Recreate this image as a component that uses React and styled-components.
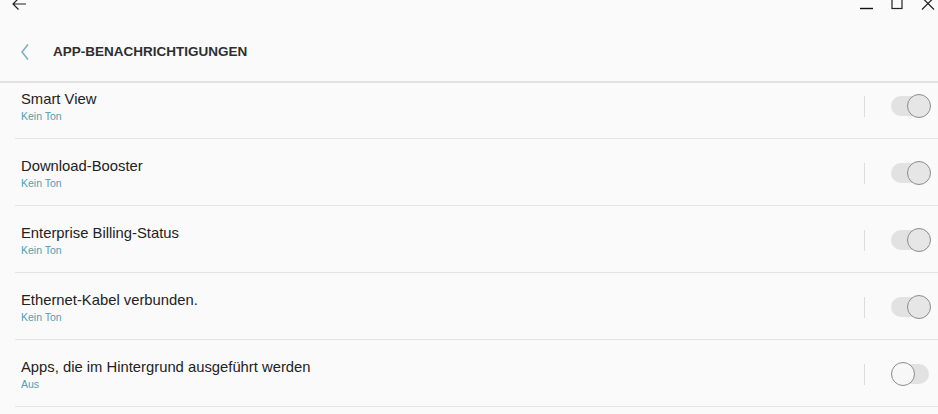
import React from "react";
import styled, { createGlobalStyle } from "styled-components";

const Global = createGlobalStyle`
  html, body { margin: 0; padding: 0; background: #fafafa; }
  body { font-family: "Liberation Sans", Arial, sans-serif; }
`;

const Window = styled.div`
  width: 938px;
  height: 414px;
  overflow: hidden;
  display: flex;
  flex-direction: column;
  background: #fafafa;
`;

const TitleBar = styled.div`
  height: 24px;
  margin-top: -8px;
  display: flex;
  align-items: center;
  padding: 0 3px 0 11px;
  flex-shrink: 0;
`;

const Controls = styled.div`
  margin-left: auto;
  display: flex;
  align-items: center;
  gap: 17px;
`;

const IconBox = styled.div`
  width: ${(p) => p.$w || 16}px;
  height: ${(p) => p.$h || 16}px;
  display: flex;
  align-items: center;
  justify-content: center;
  color: #222;
`;

const Header = styled.header`
  height: 67px;
  box-sizing: border-box;
  padding: 6px 0 0 19px;
  display: flex;
  align-items: center;
  border-bottom: 2px solid #e2e2e2;
  flex-shrink: 0;
`;

const Title = styled.h1`
  margin: 0 0 0 22px;
  font-size: 13.5px;
  font-weight: bold;
  color: #2e2e2e;
  letter-spacing: 0;
`;

const ListViewport = styled.div`
  flex: 1;
  overflow: hidden;
`;

const List = styled.div`
  margin-top: -11px;
`;

const Row = styled.div`
  height: 67px;
  box-sizing: border-box;
  margin-left: 15px;
  padding: 2px 7px 0 6px;
  display: flex;
  align-items: center;
  border-bottom: 1px solid #e4e4e4;
`;

const Texts = styled.div`
  flex: 1;
  display: flex;
  flex-direction: column;
`;

const RowTitle = styled.div`
  font-size: 14.8px;
  line-height: 18px;
  color: #222;
`;

const RowSub = styled.div`
  font-size: 10.5px;
  line-height: 13px;
  margin-top: 2px;
  color: #4f9fb1;
`;

const Divider = styled.div`
  width: 1px;
  height: 21px;
  background: #dcdcdc;
  margin-right: 26px;
`;

const Switch = styled.div`
  position: relative;
  width: 40px;
  height: 24px;
`;

const Track = styled.div`
  position: absolute;
  left: 0;
  top: 2px;
  width: 38px;
  height: 20px;
  border-radius: 10px;
  background: #e2e2e2;
`;

const Thumb = styled.div`
  position: absolute;
  top: 0;
  left: ${(p) => (p.$on ? 16 : 0)}px;
  width: 22px;
  height: 22px;
  border-radius: 50%;
  background: ${(p) => (p.$on ? "#e6e6e6" : "#f7f7f7")};
  border: 1px solid #8c8c8c;
`;

const items = [
  { title: "Smart View", sub: "Kein Ton", on: true },
  { title: "Download-Booster", sub: "Kein Ton", on: true },
  { title: "Enterprise Billing-Status", sub: "Kein Ton", on: true },
  { title: "Ethernet-Kabel verbunden.", sub: "Kein Ton", on: true },
  { title: "Apps, die im Hintergrund ausgeführt werden", sub: "Aus", on: false },
];

export default function App() {
  return (
    <>
      <Global />
      <Window>
        <TitleBar>
          <IconBox $w={16} $h={16}>
            <svg width="16" height="16" viewBox="0 0 16 16" fill="none" stroke="#222" strokeWidth="1.2">
              <path d="M15 8H2M7.5 2.5L2 8l5.5 5.5" />
            </svg>
          </IconBox>
          <Controls>
            <IconBox $w={14}>
              <svg width="14" height="16" viewBox="0 0 14 16" fill="none" stroke="#111" strokeWidth="1.4">
                <path d="M0 12.5h13" />
              </svg>
            </IconBox>
            <IconBox $w={13}>
              <svg width="13" height="16" viewBox="0 0 13 16" fill="none" stroke="#222" strokeWidth="1.2">
                <rect x="1" y="2.5" width="10" height="10" />
              </svg>
            </IconBox>
            <IconBox $w={14}>
              <svg width="14" height="16" viewBox="0 0 14 16" fill="none" stroke="#222" strokeWidth="1.2">
                <path d="M1 1.5l12 12M13 1.5l-12 12" />
              </svg>
            </IconBox>
          </Controls>
        </TitleBar>
        <Header>
          <IconBox $w={12} $h={18}>
            <svg width="12" height="18" viewBox="0 0 12 18" fill="none" stroke="#7aaebd" strokeWidth="1.5">
              <path d="M9 1.5L3 9l6 7.5" />
            </svg>
          </IconBox>
          <Title>APP-BENACHRICHTIGUNGEN</Title>
        </Header>
        <ListViewport>
          <List>
            {items.map((it) => (
              <Row key={it.title}>
                <Texts>
                  <RowTitle>{it.title}</RowTitle>
                  <RowSub>{it.sub}</RowSub>
                </Texts>
                <Divider />
                <Switch>
                  <Track />
                  <Thumb $on={it.on} />
                </Switch>
              </Row>
            ))}
          </List>
        </ListViewport>
      </Window>
    </>
  );
}
